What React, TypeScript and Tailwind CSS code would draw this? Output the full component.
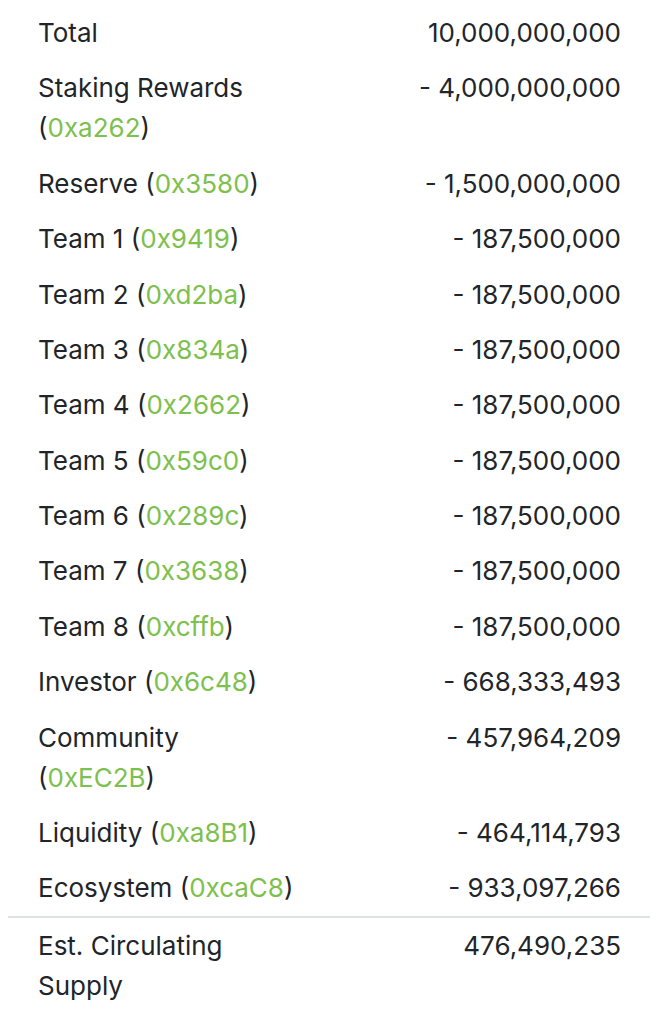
import React from "react";

type Row = { label: string; addr?: string; value: string };

const rows: Row[] = [
  { label: "Total", value: "10,000,000,000" },
  { label: "Staking Rewards", addr: "0xa262", value: "- 4,000,000,000" },
  { label: "Reserve", addr: "0x3580", value: "- 1,500,000,000" },
  { label: "Team 1", addr: "0x9419", value: "- 187,500,000" },
  { label: "Team 2", addr: "0xd2ba", value: "- 187,500,000" },
  { label: "Team 3", addr: "0x834a", value: "- 187,500,000" },
  { label: "Team 4", addr: "0x2662", value: "- 187,500,000" },
  { label: "Team 5", addr: "0x59c0", value: "- 187,500,000" },
  { label: "Team 6", addr: "0x289c", value: "- 187,500,000" },
  { label: "Team 7", addr: "0x3638", value: "- 187,500,000" },
  { label: "Team 8", addr: "0xcffb", value: "- 187,500,000" },
  { label: "Investor", addr: "0x6c48", value: "- 668,333,493" },
  { label: "Community", addr: "0xEC2B", value: "- 457,964,209" },
  { label: "Liquidity", addr: "0xa8B1", value: "- 464,114,793" },
  { label: "Ecosystem", addr: "0xcaC8", value: "- 933,097,266" },
];

export default function App() {
  return (
    <div
      className="w-[658px] h-[1024px] bg-white text-[#212529] text-[26px] leading-[40px]"
      style={{ fontFamily: "Inter, 'Noto Sans', sans-serif" }}
    >
      <div className="mx-[8px] pt-[5.4px]">
        {rows.map((r) => (
          <div key={r.label} className="grid grid-cols-2">
            <div className="pl-[30px] pr-[32px] py-[7.7px]">
              {r.label}
              {r.addr && (
                <>
                  {" "}(<a className="text-[#7dc04d]">{r.addr}</a>)
                </>
              )}
            </div>
            <div className="px-[29px] py-[7.7px] text-right">{r.value}</div>
          </div>
        ))}
        <div className="grid grid-cols-2 border-t-2 border-[#dee2e6]">
          <div className="pl-[30px] pr-[32px] py-[7.7px]">Est. Circulating Supply</div>
          <div className="px-[29px] py-[7.7px] text-right">476,490,235</div>
        </div>
      </div>
    </div>
  );
}
